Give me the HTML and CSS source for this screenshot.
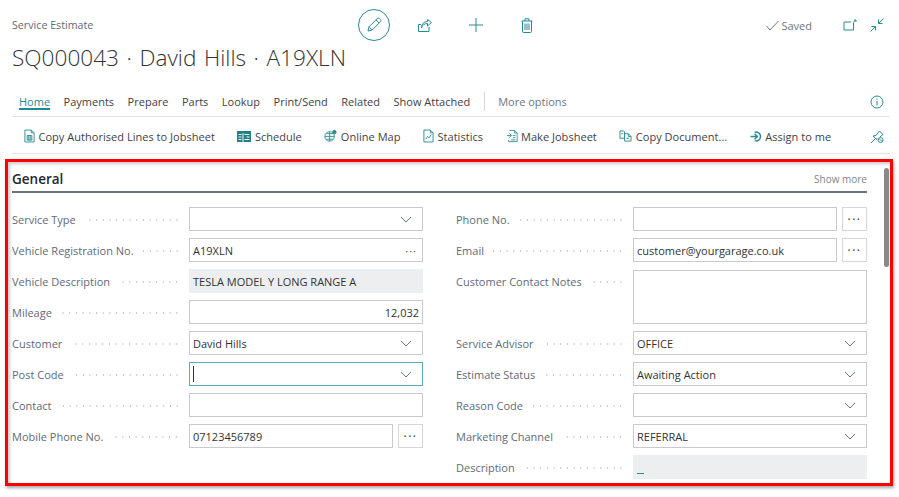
FILE: index.html
```html
<!DOCTYPE html>
<html lang="en">
<head>
<meta charset="UTF-8">
<title>Service Estimate</title>
<link rel="stylesheet" href="styles.css">
</head>
<body>
    <div class="page-head">
        <div class="top-row">
            <span class="caption">Service Estimate</span>
            <div class="top-actions">
                <button class="top-btn edit-btn"><svg width="18" height="18" viewBox="0 0 18 18"><path d="M3 15l1-4.200L12.200 2.600a1.600 1.600 0 0 1 2.300 0l.9.9a1.600 1.600 0 0 1 0 2.300L7.200 14z M4 10.800L7.200 14 M11 4l3 3"/></svg></button>
                <button class="top-btn"><svg width="14" height="13" viewBox="0 0 14 13"><path d="M11 8v4.500H.5V5.500H3 M3.500 9c.5-3 3-4.500 6-4.500V7l4-3.500L9.500.5v2C6 2.500 3.500 5 3.500 9z"/></svg></button>
                <button class="top-btn"><svg width="14" height="14" viewBox="0 0 14 14"><path d="M7 0v14 M0 7h14"/></svg></button>
                <button class="top-btn"><svg width="12" height="15" viewBox="0 0 12 15"><path d="M1.500 3V13.500a1 1 0 0 0 1 1h7a1 1 0 0 0 1-1V3 M.5 3h11 M4 3V.8h4V3 M4 5.500v6.500 M6 5.500v6.500 M8 5.500v6.500"/></svg></button>
            </div>
            <div class="status">
                <svg class="saved-tick" width="13" height="11" viewBox="0 0 13 11"><path d="M.5 6l3.500 4L12.500 1"/></svg>
                <span>Saved</span>
            </div>
            <div class="window-icons">
                <svg width="14" height="12" viewBox="0 0 14 12"><path d="M10.500 4v7H1V3h7 M10 3.500l3-2.500 M11 1h2v2"/></svg>
                <svg width="14" height="14" viewBox="0 0 14 14"><path d="M13.500.5L8.500 5.500 M8.500 1.500v4h4 M.5 13.500l5-5 M1.500 8.500h4v4"/></svg>
            </div>
        </div>
        <h1>SQ000043 · David Hills · A19XLN</h1>
    </div>

    <nav class="menu-bar">
        <a class="active">Home</a>
        <a>Payments</a>
        <a>Prepare</a>
        <a>Parts</a>
        <a>Lookup</a>
        <a>Print/Send</a>
        <a>Related</a>
        <a>Show Attached</a>
        <span class="menu-sep"></span>
        <a class="more">More options</a>
        <svg class="info-icon" width="14" height="14" viewBox="0 0 14 14"><circle cx="7" cy="7" r="6"/><path d="M7 6v4.500 M7 3.500v1.200"/></svg>
    </nav>

    <div class="action-bar">
        <a class="first"><svg width="11" height="14" viewBox="0 0 12 15"><path d="M1 1h7l3 3v10H1z M8 1v3h3 M3.500 7h5v5h-5z M5.200 7v5 M6.800 7v5"/></svg>Copy Authorised Lines to Jobsheet</a>
        <a><svg class="solid" width="14" height="13" viewBox="0 0 14 13"><path d="M0 1h14v11H0z"/><path class="cut" d="M1.500 4.500h3 M1.500 7h3 M1.500 9.500h3 M6 3v9 M7.500 4.500h5 M9.500 7h3 M7.500 9.500h5"/></svg>Schedule</a>
        <a><svg width="13" height="14" viewBox="0 0 15 15"><circle cx="6.500" cy="8" r="5.500"/><path d="M1 8h11 M6.500 2.500v11 M2.500 4.800h8 M2.500 11.200h8"/><circle class="pin" cx="12" cy="3" r="2"/></svg>Online Map</a>
        <a><svg width="11" height="14" viewBox="0 0 12 15"><path d="M1 1h7l3 3v10H1z M8 1v3h3 M3 11l2-3 1.500 1.500L9 6"/></svg>Statistics</a>
        <a><svg width="12" height="14" viewBox="0 0 14 15"><path d="M4 1h6l3 3v10H3v-2 M10 1v3h3 M1 7h5 M4 4.500L6.500 7 4 9.500 M8 7h3 M8 9.500h3 M6 12h5"/></svg>Make Jobsheet</a>
        <a><svg width="13" height="12" viewBox="0 0 14 13"><path d="M1 1h4l1 1v7H1z M6 4h4l3 3v5H6z M10 4v3h3 M2.500 4h2 M8 9h3"/></svg>Copy Document...</a>
        <a><svg class="assign" width="12" height="11" viewBox="0 0 13 12"><path d="M5 1.500a4.800 4.800 0 1 1 0 9 M.5 6h7 M5 3l3 3-3 3"/></svg>Assign to me</a>
        <svg class="pin-icon" width="14" height="15" viewBox="0 0 14 15"><path d="M1 14l4-4 M3 7l3.500 3.500 M3 7l3-.5L9.500 2 13 5.500 10 8 M6.500 10.500L7 9"/><circle cx="10.500" cy="11" r="2.500"/><path d="M9 9.500l3 3"/></svg>
    </div>

    <section class="general">
        <div class="section-head">
            <h2>General</h2>
            <span class="show-more">Show more</span>
        </div>
        <div class="form-cols">
            <div class="form-col">
                <div class="field"><label>Service Type</label><div class="input"><svg class="chev" width="12" height="7" viewBox="0 0 12 7"><path d="M1 1l5 5 5-5"/></svg></div></div>
                <div class="field"><label>Vehicle Registration No.</label><div class="input">A19XLN<span class="dots-in">···</span></div></div>
                <div class="field"><label>Vehicle Description</label><div class="input readonly">TESLA MODEL Y LONG RANGE A</div></div>
                <div class="field"><label>Mileage</label><div class="input number">12,032</div></div>
                <div class="field"><label>Customer</label><div class="input">David Hills<svg class="chev" width="12" height="7" viewBox="0 0 12 7"><path d="M1 1l5 5 5-5"/></svg></div></div>
                <div class="field"><label>Post Code</label><div class="input focused"><span class="caret"></span><svg class="chev" width="12" height="7" viewBox="0 0 12 7"><path d="M1 1l5 5 5-5"/></svg></div></div>
                <div class="field"><label>Contact</label><div class="input"></div></div>
                <div class="field"><label>Mobile Phone No.</label><div class="input">07123456789</div><button class="more-btn">···</button></div>
            </div>
            <div class="form-col">
                <div class="field"><label>Phone No.</label><div class="input"></div><button class="more-btn">···</button></div>
                <div class="field"><label>Email</label><div class="input">customer@yourgarage.co.uk</div><button class="more-btn">···</button></div>
                <div class="field notes"><label>Customer Contact Notes</label><div class="input"></div></div>
                <div class="field"><label>Service Advisor</label><div class="input">OFFICE<svg class="chev" width="12" height="7" viewBox="0 0 12 7"><path d="M1 1l5 5 5-5"/></svg></div></div>
                <div class="field"><label>Estimate Status</label><div class="input">Awaiting Action<svg class="chev" width="12" height="7" viewBox="0 0 12 7"><path d="M1 1l5 5 5-5"/></svg></div></div>
                <div class="field"><label>Reason Code</label><div class="input"><svg class="chev" width="12" height="7" viewBox="0 0 12 7"><path d="M1 1l5 5 5-5"/></svg></div></div>
                <div class="field"><label>Marketing Channel</label><div class="input">REFERRAL<svg class="chev" width="12" height="7" viewBox="0 0 12 7"><path d="M1 1l5 5 5-5"/></svg></div></div>
                <div class="field"><label>Description</label><div class="input readonly"><span class="dash"></span></div></div>
            </div>
        </div>
        <div class="scroll-thumb"></div>
    </section>
</body>
</html>
```

FILE: styles.css
```css
html, body {
    height: 497px;
    overflow: hidden;
}

body {
    margin: 0;
    background-color: #fff;
    font-family: "Open Sans", "Noto Sans", sans-serif;
    font-size: 11px;
    color: #333;
}

svg {
    fill: none;
    stroke: #2b8a90;
    stroke-width: 1;
    flex-shrink: 0;
}

.page-head {
    padding: 9px 0 0 12px;
    height: 76px;
    box-sizing: border-box;
}

.top-row {
    display: flex;
    align-items: center;
    height: 32px;
    padding-right: 15px;
}

.caption {
    width: 346px;
    color: #616b78;
    font-size: 10.7px;
}

.top-actions {
    display: flex;
    gap: 19px;
}

.top-btn {
    display: flex;
    align-items: center;
    justify-content: center;
    width: 32px;
    height: 32px;
    padding: 0;
    background: none;
    border: none;
}

.edit-btn {
    border: 1px solid #2b8a90;
    border-radius: 50%;
}

.status {
    display: flex;
    align-items: center;
    gap: 2px;
    margin-left: auto;
    color: #6f7680;
}

.saved-tick {
    stroke: #6f7680;
}

.window-icons {
    display: flex;
    align-items: center;
    gap: 13px;
    margin-left: 31px;
}

h1 {
    margin: 0;
    padding-top: 1px;
    font-size: 22.6px;
    font-weight: 300;
    line-height: 32px;
    word-spacing: 1.7px;
    color: #333;
}

.menu-bar {
    display: flex;
    align-items: center;
    gap: 13.5px;
    height: 41px;
    margin: 0 9px 0 12px;
    padding: 11px 6px 0 7px;
    border-bottom: 1px solid #e4e4e6;
    box-sizing: border-box;
}

.menu-bar a {
    position: relative;
    color: #3f3f46;
    white-space: nowrap;
}

.menu-bar a.active {
    color: #1f8a92;
}

.menu-bar a.active::after {
    content: "";
    position: absolute;
    left: 0;
    right: 0;
    bottom: -1px;
    height: 2px;
    background-color: #1f8a92;
}

.menu-sep {
    width: 1px;
    height: 19px;
    background-color: #d5d7db;
}

.menu-bar a.more {
    color: #6f7680;
}

.info-icon {
    margin-left: auto;
}

.action-bar {
    display: flex;
    align-items: center;
    gap: 22.5px;
    height: 37px;
    margin: 0 9px 0 12px;
    padding: 2px 6px 0 12px;
    border-bottom: 1px solid #e4e4e6;
    box-sizing: border-box;
}

.action-bar a {
    display: flex;
    align-items: center;
    gap: 3.5px;
    color: #3f3f46;
    letter-spacing: 0.03px;
    white-space: nowrap;
}

.solid {
    stroke: none;
    fill: #1f7f86;
}

.solid .cut {
    stroke: #fff;
    fill: none;
}

.pin {
    fill: #2b8a90;
}

.assign {
    stroke-width: 1.6;
}

.pin-icon {
    margin-left: auto;
}

.general {
    position: relative;
    height: 327px;
    margin: 5px 6px 0 5px;
    padding: 0 23px 0 4px;
    border: 3px solid #f00;
    box-shadow: 1px 2px 3px rgba(0, 0, 0, 0.35), inset 2px 2px 3px rgba(0, 0, 0, 0.2);
    box-sizing: border-box;
    overflow: hidden;
}

.section-head {
    display: flex;
    align-items: center;
    justify-content: space-between;
    height: 31px;
    border-bottom: 2px solid #6b7280;
    box-sizing: border-box;
}

h2 {
    margin: 4px 0 0;
    font-size: 13.5px;
    font-weight: 600;
    color: #262626;
}

.show-more {
    margin-top: 4px;
    font-size: 10px;
    color: #808690;
}

.form-cols {
    display: grid;
    grid-template-columns: 411px 411px;
    column-gap: 33px;
    padding-top: 14px;
}

.field {
    display: flex;
    gap: 5px;
    margin-bottom: 7px;
}

.field label {
    display: flex;
    align-items: center;
    width: 177px;
    height: 24px;
    margin-right: -5px;
    flex-shrink: 0;
    color: #616b78;
    white-space: nowrap;
    overflow: hidden;
}

.field label::after {
    content: "";
    flex: 1;
    height: 2px;
    margin: 2px 9px 0 8px;
    background-image: radial-gradient(circle, #c2c5cb 0.7px, transparent 0.8px);
    background-size: 6.7px 2px;
    background-position: right;
}

.input {
    display: flex;
    align-items: center;
    justify-content: space-between;
    flex: 1;
    height: 24px;
    padding: 0 3px;
    border: 1px solid #c8cad0;
    box-sizing: border-box;
    color: #333;
    white-space: nowrap;
}

.input .chev {
    margin-left: auto;
    margin-right: 7px;
    stroke: #6f7680;
}

.readonly {
    background-color: #eceef0;
    border-color: #eceef0;
}

.number {
    justify-content: flex-end;
}

.focused {
    border-color: #58b0b3;
}

.caret {
    width: 1px;
    height: 16px;
    background-color: #333;
}

.dots-in {
    margin-right: 2px;
    color: #555;
    letter-spacing: 1px;
}

.more-btn {
    width: 25px;
    height: 24px;
    padding: 0;
    background: #fff;
    border: 1px solid #d5d7db;
    color: #333;
    font-family: inherit;
    font-size: 12px;
    letter-spacing: 1.5px;
    flex-shrink: 0;
}

.notes {
    height: 54px;
    margin-top: 8px;
}

.notes label {
    margin-top: -1px;
}

.notes .input {
    height: 54px;
}

.dash {
    align-self: flex-end;
    width: 7px;
    height: 1px;
    margin-bottom: 4px;
    background-color: #2b8a90;
}

.scroll-thumb {
    position: absolute;
    top: 6px;
    right: 1px;
    width: 5px;
    height: 99px;
    border-radius: 3px;
    background-color: #8a8a8a;
}
```
